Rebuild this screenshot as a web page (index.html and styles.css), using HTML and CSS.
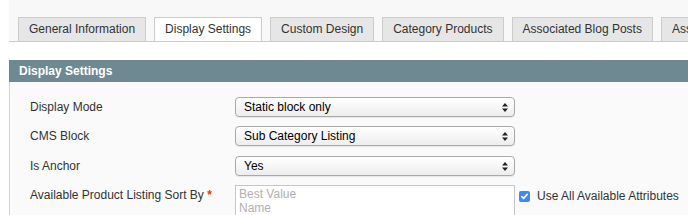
FILE: index.html
```html
<!DOCTYPE html>
<html lang="en">
<head>
  <meta charset="UTF-8" />
  <meta name="viewport" content="width=device-width, initial-scale=1.0" />
  <title>Category - Display Settings</title>
  <link rel="stylesheet" href="styles.css">
</head>
<body>

  <!-- Tab strip -->
  <div class="tabs">
    <div class="tab">General Information</div>
    <div class="tab active">Display Settings</div>
    <div class="tab">Custom Design</div>
    <div class="tab">Category Products</div>
    <div class="tab">Associated Blog Posts</div>
    <div class="tab">Associated Products</div>
  </div>

  <!-- Fieldset head -->
  <div class="entry-head">Display Settings</div>

  <!-- Fieldset body -->
  <div class="fieldset">
    <div class="form-row">
      <label class="label">Display Mode</label>
      <div class="select">
        <span>Static block only</span>
        <svg class="arrows" width="6" height="9" viewBox="0 0 6 9"><path d="M3 0 L6 3.5 L0 3.5 Z M0 5.5 L6 5.5 L3 9 Z" fill="#222"/></svg>
      </div>
    </div>
    <div class="form-row">
      <label class="label">CMS Block</label>
      <div class="select">
        <span>Sub Category Listing</span>
        <svg class="arrows" width="6" height="9" viewBox="0 0 6 9"><path d="M3 0 L6 3.5 L0 3.5 Z M0 5.5 L6 5.5 L3 9 Z" fill="#222"/></svg>
      </div>
    </div>
    <div class="form-row">
      <label class="label">Is Anchor</label>
      <div class="select">
        <span>Yes</span>
        <svg class="arrows" width="6" height="9" viewBox="0 0 6 9"><path d="M3 0 L6 3.5 L0 3.5 Z M0 5.5 L6 5.5 L3 9 Z" fill="#222"/></svg>
      </div>
    </div>
    <div class="form-row">
      <label class="label">Available Product Listing Sort By <span class="required">*</span></label>
      <div class="multiselect">
        <div>Best Value</div>
        <div>Name</div>
        <div>Price</div>
      </div>
      <div class="use-default">
        <span class="checkbox">
          <svg width="11" height="11" viewBox="0 0 11 11"><path d="M2.8 5.6 L4.6 7.4 L8.2 3.4" fill="none" stroke="#fff" stroke-width="1.6" stroke-linecap="round" stroke-linejoin="round"/></svg>
        </span>
        <span>Use All Available Attributes</span>
      </div>
    </div>
  </div>

</body>
</html>
```

FILE: styles.css
```css
html, body {
  margin: 0;
  padding: 0;
  overflow: hidden;
  background: #fff;
}

body {
  font-family: "Liberation Sans", Arial, Helvetica, sans-serif;
  font-size: 12px;
  color: #333;
}

/* Tab strip */
.tabs {
  display: flex;
  flex-wrap: nowrap;
  gap: 8px;
  margin-left: 9px;
  padding: 17px 0 0 9px;
  background: #f8f8f8;
  border-bottom: 1px solid #ccc;
  white-space: nowrap;
  overflow: hidden;
}

.tab {
  flex: none;
  height: 23px;
  line-height: 23px;
  padding: 0 10px;
  background: #e6e6e6;
  border: 1px solid #ccc;
  border-bottom: none;
  color: #333;
}

.tab.active {
  background: #fff;
  margin-bottom: -1px;
  height: 24px;
}

/* Fieldset head */
.entry-head {
  margin: 18px 0 0 9px;
  height: 22px;
  line-height: 22px;
  padding-left: 10px;
  background: #6f8992;
  color: #fff;
  font-weight: bold;
}

/* Fieldset body */
.fieldset {
  margin-left: 9px;
  min-height: 200px;
  padding: 15px 0 0 20px;
  background: #fafafa;
  border-left: 1px solid #d6d6d6;
  display: flex;
  flex-direction: column;
  gap: 9.4px;
}

.form-row {
  display: flex;
  align-items: flex-start;
}

.label {
  width: 205px;
  flex: none;
  padding-top: 3px;
  line-height: 14px;
  color: #333;
}

.required {
  color: #eb340a;
  font-weight: bold;
}

/* Mac style popup select */
.select {
  position: relative;
  box-sizing: border-box;
  width: 280px;
  height: 20px;
  line-height: 18px;
  padding-left: 8px;
  border: 1px solid #a9a9a9;
  border-radius: 4px;
  background: linear-gradient(#ffffff, #ededed);
  box-shadow: 0 1px 1px rgba(0, 0, 0, 0.08);
  color: #000;
}

.select .arrows {
  position: absolute;
  right: 6px;
  top: 5px;
}

/* Disabled multi select */
.multiselect {
  box-sizing: border-box;
  width: 280px;
  height: 80px;
  padding: 1px 0 0 3px;
  border: 1px solid #c6c6c6;
  background: #fff;
  color: #b0b0b0;
  line-height: 14px;
  overflow: hidden;
}

.use-default {
  display: flex;
  align-items: center;
  gap: 7px;
  margin: 4px 0 0 4px;
  color: #333;
  white-space: nowrap;
}

.checkbox {
  width: 11px;
  height: 11px;
  border-radius: 2px;
  background: #3d8af7;
  display: flex;
}
```
